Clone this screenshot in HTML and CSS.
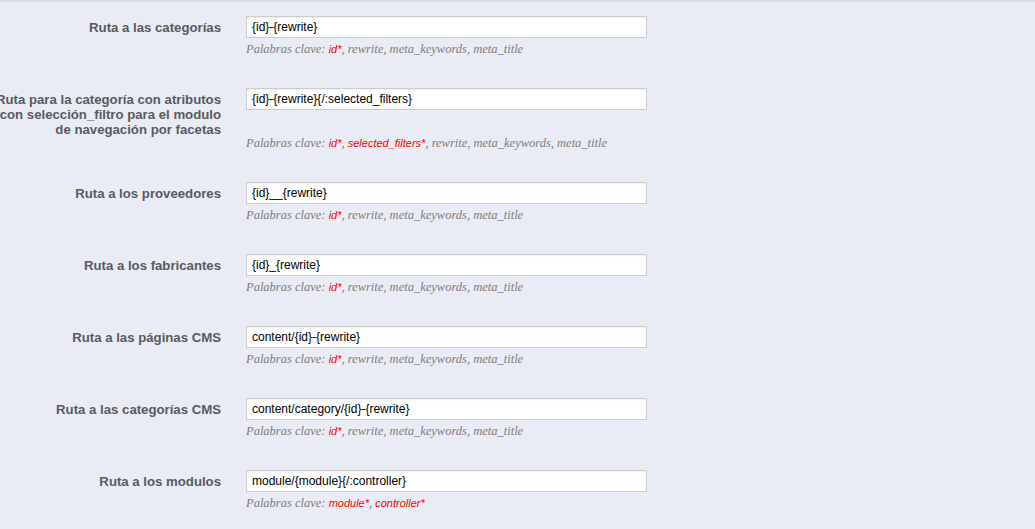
FILE: index.html
```html
<!DOCTYPE html>
<html lang="es">
<head>
<meta charset="utf-8">
<title>Rutas</title>
<link rel="stylesheet" href="styles.css">
</head>
<body>
<div class="page">
  <div class="form">
    <div class="row">
      <label class="lbl">Ruta a las categorías</label>
      <input class="field" type="text" value="{id}-{rewrite}">
      <p class="help">Palabras clave: <span class="req">id*</span>, rewrite, meta_keywords, meta_title</p>
    </div>
    <div class="row">
      <label class="lbl">Ruta para la categoría con atributos con selección_filtro para el modulo de navegación por facetas</label>
      <input class="field" type="text" value="{id}-{rewrite}{/:selected_filters}">
      <p class="help">Palabras clave: <span class="req">id*</span>, <span class="req">selected_filters*</span>, rewrite, meta_keywords, meta_title</p>
    </div>
    <div class="row">
      <label class="lbl">Ruta a los proveedores</label>
      <input class="field" type="text" value="{id}__{rewrite}">
      <p class="help">Palabras clave: <span class="req">id*</span>, rewrite, meta_keywords, meta_title</p>
    </div>
    <div class="row">
      <label class="lbl">Ruta a los fabricantes</label>
      <input class="field" type="text" value="{id}_{rewrite}">
      <p class="help">Palabras clave: <span class="req">id*</span>, rewrite, meta_keywords, meta_title</p>
    </div>
    <div class="row">
      <label class="lbl">Ruta a las páginas CMS</label>
      <input class="field" type="text" value="content/{id}-{rewrite}">
      <p class="help">Palabras clave: <span class="req">id*</span>, rewrite, meta_keywords, meta_title</p>
    </div>
    <div class="row">
      <label class="lbl">Ruta a las categorías CMS</label>
      <input class="field" type="text" value="content/category/{id}-{rewrite}">
      <p class="help">Palabras clave: <span class="req">id*</span>, rewrite, meta_keywords, meta_title</p>
    </div>
    <div class="row">
      <label class="lbl">Ruta a los modulos</label>
      <input class="field" type="text" value="module/{module}{/:controller}">
      <p class="help">Palabras clave: <span class="req">module*</span>, <span class="req">controller*</span></p>
    </div>
  </div>
</div>
</body>
</html>
```

FILE: styles.css
```css
html, body {
  margin: 0;
  padding: 0;
  background: #e9ecf4;
}

.page {
  border-top: 2px solid #dcdee3;
  min-height: 527px;
  overflow: hidden;
}

.form {
  padding-top: 14px;
  margin-left: -15px;
}

.row {
  display: grid;
  grid-template-columns: 236px 401px;
  column-gap: 25px;
  align-items: start;
  margin-bottom: 32px;
}

.lbl {
  grid-column: 1;
  grid-row: 1;
  font-family: "Liberation Sans", Arial, sans-serif;
  font-weight: bold;
  font-size: 13.2px;
  line-height: 15px;
  color: #585a62;
  text-align: right;
  padding-top: 4px;
  margin-bottom: -5px;
}

.field {
  grid-column: 2;
  grid-row: 1;
  box-sizing: border-box;
  width: 401px;
  height: 22px;
  margin: 0;
  padding: 0 5px;
  border: 1px solid #cbcbcb;
  background: #fff;
  box-shadow: inset 0 1px 2px rgba(0, 0, 0, 0.06);
  font-family: "Liberation Sans", Arial, sans-serif;
  font-size: 12px;
  color: #000;
  outline: none;
}

.help {
  grid-column: 2;
  grid-row: 2;
  margin: 4px 0 0 0;
  font-family: "Liberation Serif", Georgia, serif;
  font-style: italic;
  font-size: 12.5px;
  line-height: 14px;
  color: #7d7d7d;
}

.req {
  font-family: "Liberation Sans", Arial, sans-serif;
  font-size: 11px;
  color: #ff0000;
}
```
